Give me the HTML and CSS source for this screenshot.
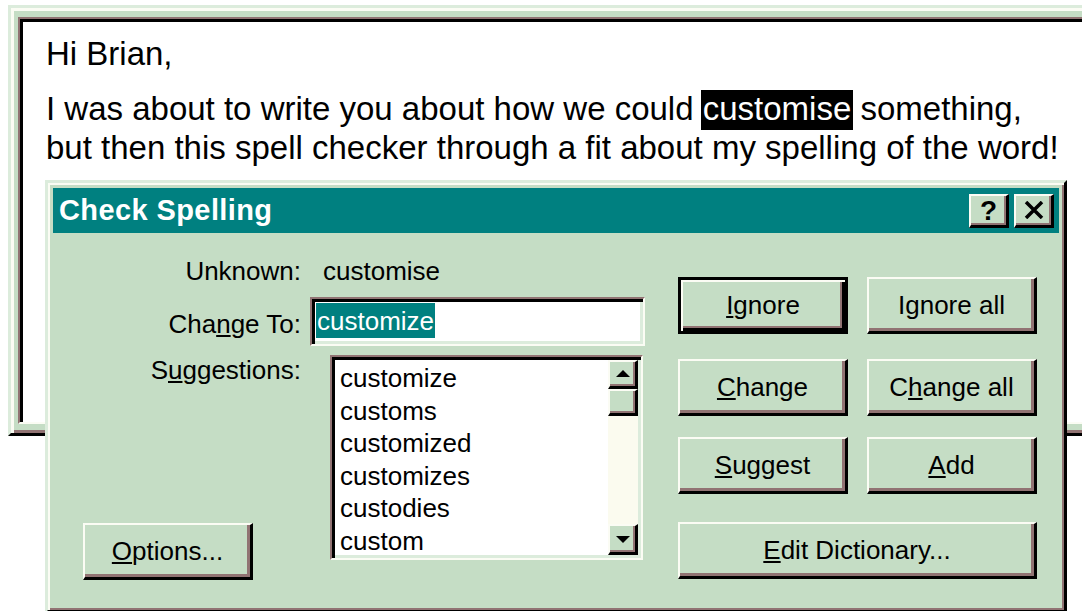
FILE: index.html
```html
<!DOCTYPE html>
<html lang="en">
<head>
<meta charset="utf-8">
<title>Check Spelling</title>
<link rel="stylesheet" href="styles.css">
</head>
<body>
  <div class="editor">
    <div class="editor-client">
      <p class="para">Hi Brian,</p>
      <p class="para">I was about to write you about how we could <span class="sel">customise</span> something,<br>but then this spell checker through a fit about my spelling of the word!</p>
    </div>
  </div>

  <div class="dialog" role="dialog" aria-label="Check Spelling">
    <div class="titlebar">
      <span class="title">Check Spelling</span>
      <div class="title-btns">
        <button class="tbtn help" type="button">?</button>
        <button class="tbtn close" type="button" aria-label="Close">
          <svg width="20" height="18" viewBox="0 0 20 18" aria-hidden="true">
            <path d="M2 1 L18 17 M18 1 L2 17" stroke="#000" stroke-width="3.5" fill="none"/>
          </svg>
        </button>
      </div>
    </div>

    <div class="dlg-body">
      <div class="fields">
        <div class="row row-unknown">
          <span class="label">Unknown:</span>
          <span class="value">customise</span>
        </div>
        <div class="row row-change">
          <span class="label">Cha<u>n</u>ge To:</span>
          <div class="field"><span class="field-sel">customize</span></div>
        </div>
        <div class="row row-sugg">
          <div class="label-col">
            <span class="label">S<u>u</u>ggestions:</span>
            <button class="btn options" type="button"><span><u>O</u>ptions...</span></button>
          </div>
          <div class="listbox">
            <ul class="items">
              <li>customize</li>
              <li>customs</li>
              <li>customized</li>
              <li>customizes</li>
              <li>custodies</li>
              <li>custom</li>
            </ul>
            <div class="vscroll">
              <div class="sbtn"><i class="arrow up"></i></div>
              <div class="thumb"></div>
              <div class="track"></div>
              <div class="sbtn sbtn-down"><i class="arrow down"></i></div>
            </div>
          </div>
        </div>
      </div>

      <div class="actions">
        <div class="btn-row">
          <button class="btn default" type="button"><span><u>I</u>gnore</span></button>
          <button class="btn" type="button"><span>I<u>g</u>nore all</span></button>
        </div>
        <div class="btn-row">
          <button class="btn" type="button"><span><u>C</u>hange</span></button>
          <button class="btn" type="button"><span>C<u>h</u>ange all</span></button>
        </div>
        <div class="btn-row">
          <button class="btn" type="button"><span><u>S</u>uggest</span></button>
          <button class="btn" type="button"><span><u>A</u>dd</span></button>
        </div>
        <div class="btn-row">
          <button class="btn wide" type="button"><span><u>E</u>dit Dictionary...</span></button>
        </div>
      </div>
    </div>
  </div>
</body>
</html>
```

FILE: styles.css
```css
:root {
  --face: #c5ddc5;
  --light: #dcecdc;
  --hi: #fbfcf4;
  --shadow: #917373;
  --dark: #000;
  --teal: #008080;
  --track: #fbfbef;
}

* { box-sizing: border-box; }

html, body {
  margin: 0;
  height: 100%;
}

body {
  position: relative;
  overflow: hidden;
  background: #fff;
  font-family: "Liberation Sans", Arial, sans-serif;
  color: #000;
}

/* ---------- document window behind the dialog ---------- */
.editor {
  margin: 5px 0 0 8px;
  width: 1090px;
  height: 431px;
  background: var(--face);
  border-style: solid;
  border-width: 3px 0 3px 3px;
  border-color: var(--light) transparent var(--dark) var(--light);
  box-shadow: inset 3px 3px 0 var(--hi), inset 0 -3px 0 var(--shadow);
  padding: 9px 0 9px 7px;
}

.editor-client {
  height: 100%;
  background: #fff;
  border-style: solid;
  border-width: 2px 0 2px 2px;
  border-color: var(--shadow) transparent var(--hi) var(--shadow);
  box-shadow: inset 3px 3px 0 var(--dark);
  padding: 15px 0 0 26px;
}

.para {
  margin: 0 0 16px;
  font-size: 33px;
  line-height: 39px;
  white-space: nowrap;
}

.sel {
  background: #000;
  color: #fff;
  padding: 0 2px 3px;
  margin: 0 -2px;
}

/* ---------- dialog window ---------- */
.dialog {
  position: absolute;
  left: 45px;
  top: 180px;
  width: 1022px;
  height: 433px;
  display: flex;
  flex-direction: column;
  background: var(--face);
  border: 3px solid;
  border-color: var(--light) var(--dark) var(--dark) var(--light);
  box-shadow: inset 2px 2px 0 var(--hi), inset -2px -2px 0 var(--shadow);
  padding: 5px;
}

.titlebar {
  height: 45px;
  flex: none;
  display: flex;
  align-items: center;
  justify-content: space-between;
  background: var(--teal);
  padding: 0 5px 0 6px;
}

.title {
  color: #fff;
  font-weight: bold;
  font-size: 29px;
  letter-spacing: 0.4px;
  white-space: nowrap;
}

.title-btns {
  display: flex;
  gap: 5px;
}

.tbtn {
  width: 40px;
  height: 34px;
  padding: 0;
  display: flex;
  align-items: center;
  justify-content: center;
  background: var(--face);
  border-style: solid;
  border-width: 2px 3px 3px 2px;
  border-color: var(--hi) var(--dark) var(--dark) var(--hi);
  box-shadow: inset -2px -2px 0 var(--shadow);
  font-family: "Liberation Sans", Arial, sans-serif;
  font-weight: bold;
  font-size: 28px;
  line-height: 1;
  color: #000;
}

.tbtn.help { padding-top: 1px; }

/* ---------- dialog body ---------- */
.dlg-body {
  flex: 1;
  display: flex;
  font-size: 26px;
}

.fields {
  width: 625px;
  flex: none;
  padding-top: 23px;
}

.row { display: flex; }

.label {
  display: block;
  width: 248px;
  flex: none;
  text-align: right;
  line-height: 30px;
  white-space: nowrap;
}

.value {
  margin-left: 22px;
  line-height: 30px;
}

.row-change {
  margin-top: 11px;
  align-items: flex-start;
}

.row-change .label { padding-top: 12px; }

.field {
  margin-left: 9px;
  width: 335px;
  height: 49px;
  background: #fff;
  border: 2px solid;
  border-color: var(--shadow) var(--hi) var(--hi) var(--shadow);
  box-shadow: inset 3px 3px 0 var(--dark), inset -3px -3px 0 var(--light);
  padding-left: 4px;
  line-height: 45px;
  white-space: nowrap;
}

.field-sel {
  background: var(--teal);
  color: #fff;
  padding: 3px 1px 2px;
}

.row-sugg {
  margin-top: 9px;
  height: 225px;
  align-items: flex-start;
}

.label-col {
  width: 248px;
  height: 100%;
  flex: none;
  display: flex;
  flex-direction: column;
  justify-content: space-between;
}

.listbox {
  margin-left: 29px;
  width: 313px;
  height: 205px;
  display: flex;
  background: #fff;
  border: 2px solid;
  border-color: var(--shadow) var(--hi) var(--hi) var(--shadow);
  box-shadow: inset 3px 3px 0 var(--dark), inset -3px -3px 0 var(--light);
  padding: 3px;
}

.items {
  flex: 1;
  list-style: none;
  margin: 0;
  padding: 2px 0 0 5px;
  line-height: 32.6px;
  white-space: nowrap;
}

.vscroll {
  width: 30px;
  flex: none;
  display: flex;
  flex-direction: column;
  background: var(--track);
}

.sbtn,
.thumb {
  flex: none;
  background: var(--face);
  border-style: solid;
  border-width: 2px 3px 3px 2px;
  border-color: var(--hi) var(--dark) var(--dark) var(--hi);
  box-shadow: inset -2px -2px 0 var(--shadow);
}

.sbtn {
  height: 29px;
  display: flex;
  align-items: center;
  justify-content: center;
}

.sbtn-down { height: 31px; }

.thumb { height: 27px; }

.track { flex: 1; }

.arrow {
  width: 0;
  height: 0;
  border-left: 7px solid transparent;
  border-right: 7px solid transparent;
}

.arrow.up { border-bottom: 7px solid #000; margin-top: -2px; }
.arrow.down { border-top: 7px solid #000; margin-top: 1px; }

/* ---------- push buttons ---------- */
.actions {
  width: 359px;
  flex: none;
  padding-top: 44px;
  display: flex;
  flex-direction: column;
}

.btn-row {
  display: flex;
  gap: 19px;
}

.btn-row:nth-child(2) { margin-top: 25px; }
.btn-row:nth-child(3) { margin-top: 21px; }
.btn-row:nth-child(4) { margin-top: 28px; }

.btn {
  width: 170px;
  height: 57px;
  padding: 0;
  display: flex;
  align-items: center;
  justify-content: center;
  background: var(--face);
  border-style: solid;
  border-width: 2px 3px 3px 2px;
  border-color: var(--hi) var(--dark) var(--dark) var(--hi);
  box-shadow: inset -3px -3px 0 var(--shadow);
  font-family: "Liberation Sans", Arial, sans-serif;
  font-size: 26px;
  color: #000;
  white-space: nowrap;
}

.btn.default {
  border: 3px solid var(--dark);
  box-shadow: inset 2px 2px 0 var(--hi), inset -3px -3px 0 var(--dark), inset -5px -5px 0 var(--shadow);
}

.btn.wide { width: 359px; }

.btn.options { margin-left: 30px; }
```
